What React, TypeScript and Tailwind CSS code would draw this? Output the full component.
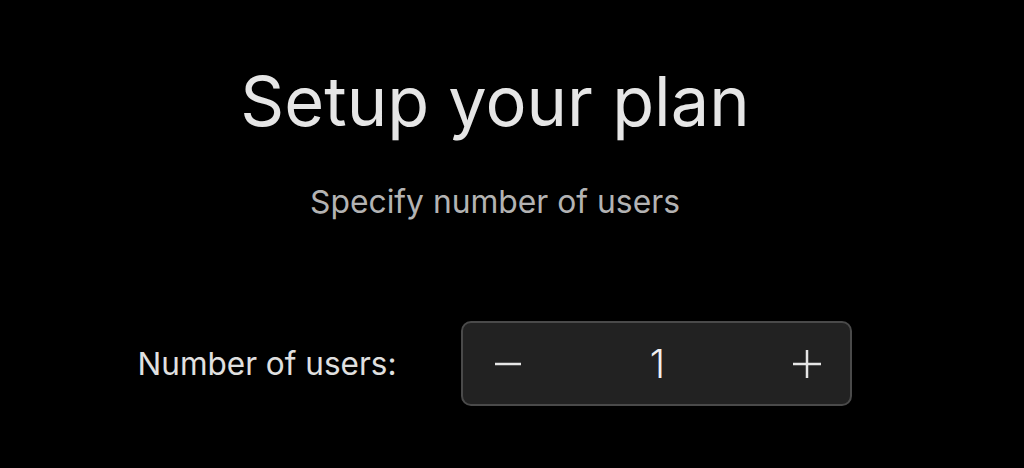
import React from "react";

export default function App() {
  return (
    <div className="w-[1024px] h-[468px] bg-black flex flex-col items-center pr-[34px] font-['Inter',sans-serif]">
      <h1 className="mt-[68px] text-[68.5px] leading-none text-[#e6e6e6] font-normal">Setup your plan</h1>
      <p className="mt-[49px] text-[31.8px] leading-none text-[#b3b3b3]">Specify number of users</p>
      <div className="mt-[104px] flex items-center gap-[65px]">
        <span className="text-[31.5px] leading-none text-[#e0e0e0]">Number of users:</span>
        <div className="w-[391px] h-[85px] rounded-[10px] border-2 border-[#4a4a4a] bg-[#222222] flex items-center justify-between pl-[30px] pr-[29px]">
          <svg width="28" height="28" viewBox="0 0 28 28"><path d="M2 14h26" stroke="#e6e6e6" strokeWidth="2.5" /></svg>
          <span className="text-[39px] leading-none text-[#f0f0f0] font-light">1</span>
          <svg width="28" height="28" viewBox="0 0 28 28"><path d="M0 14h28M14 0v28" stroke="#e6e6e6" strokeWidth="2.5" /></svg>
        </div>
      </div>
    </div>
  );
}
